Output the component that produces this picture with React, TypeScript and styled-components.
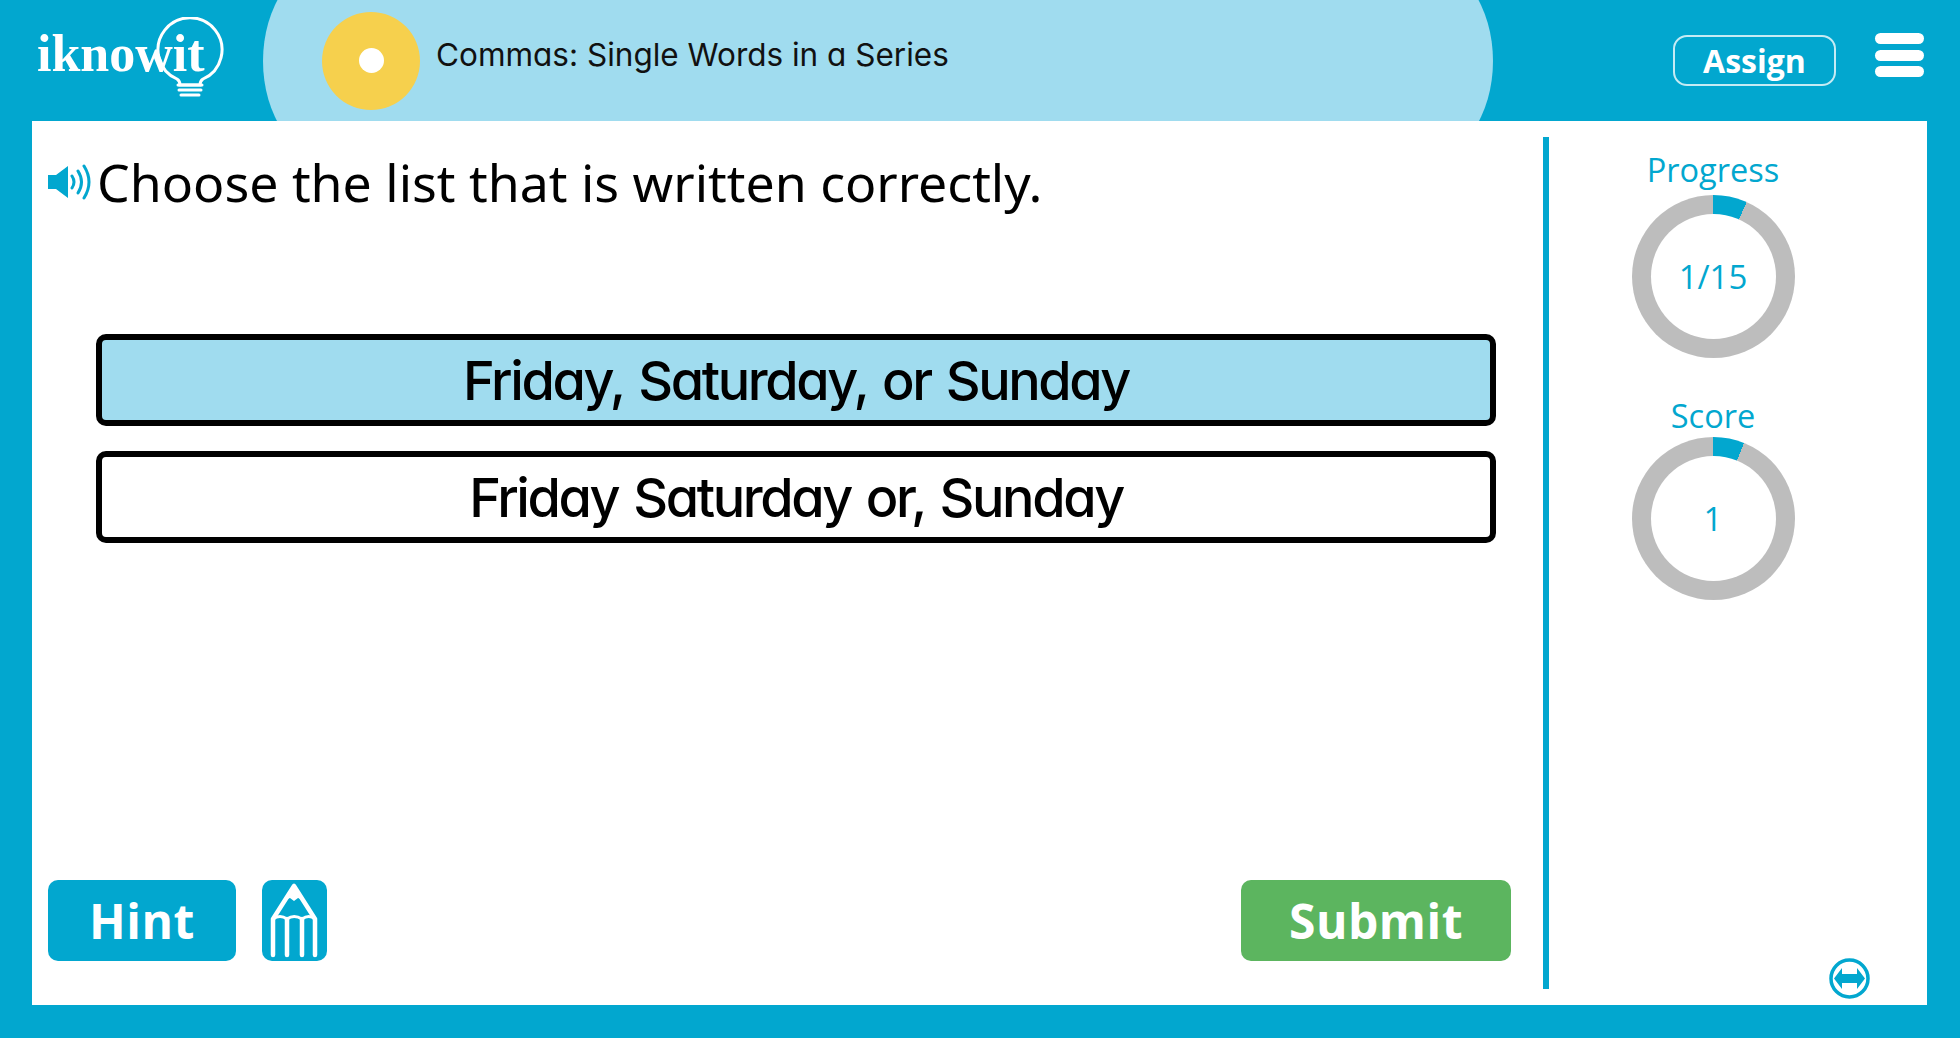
import React from 'react';
import styled, { createGlobalStyle } from 'styled-components';

const BLUE = '#02a7cf';
const PALE = '#a0dcef';

const GlobalStyle = createGlobalStyle`
  html, body { margin: 0; padding: 0; background: ${BLUE}; }
`;

const Page = styled.div`
  width: 1960px;
  height: 1038px;
  display: flex;
  flex-direction: column;
  overflow: hidden;
  background: ${BLUE};
  font-family: "Open Sans", "Noto Sans", sans-serif;
`;

const Header = styled.header`
  height: 121px;
  flex: none;
  display: flex;
  align-items: center;
  overflow: hidden;
`;

const LogoBox = styled.div`
  position: relative;
  width: 263px;
  height: 121px;
  flex: none;
`;

const LogoText = styled.span`
  position: absolute;
  left: 37px;
  top: 24px;
  font-family: "Liberation Serif", serif;
  font-weight: 700;
  font-size: 52px;
  line-height: 60px;
  color: #fff;
`;

const Bulb = styled.svg`
  position: absolute;
  left: 152px;
  top: 17px;
`;

const TopicPill = styled.div`
  width: 1230px;
  height: 200px;
  flex: none;
  display: flex;
  align-items: center;
  padding-left: 59px;
  box-sizing: border-box;
  background: ${PALE};
  border-radius: 70px / 100px;
`;

const Medal = styled.div`
  width: 98px;
  height: 98px;
  flex: none;
  border-radius: 50%;
  background: #f6d04d;
  display: flex;
  align-items: center;
  justify-content: center;
`;

const MedalDot = styled.div`
  width: 25px;
  height: 25px;
  border-radius: 50%;
  background: #fff;
`;

const TopicTitle = styled.h1`
  margin: -12px 0 0 16px;
  font-family: "Inter", sans-serif;
  font-feature-settings: 'cv11';
  font-weight: 400;
  font-size: 31.5px;
  color: #111;
`;

const AssignButton = styled.button`
  width: 163px;
  height: 51px;
  margin: 0 39px 0 180px;
  padding: 0;
  flex: none;
  box-sizing: border-box;
  background: transparent;
  border: 2px solid #c6ebf4;
  border-radius: 14px;
  font-family: "Open Sans", sans-serif;
  font-weight: 700;
  font-size: 32px;
  line-height: 42px;
  color: #fff;
`;

const Hamburger = styled.div`
  width: 49px;
  margin-bottom: 11px;
  display: flex;
  flex-direction: column;
  gap: 5.5px;
  flex: none;
`;

const HamburgerBar = styled.span`
  height: 11px;
  border-radius: 6px;
  background: #fff;
`;

const Main = styled.main`
  height: 884px;
  margin: 0 33px 0 32px;
  flex: none;
  display: flex;
  background: #fff;
`;

const QuestionPane = styled.section`
  width: 1511px;
  flex: none;
  display: flex;
  flex-direction: column;
  box-sizing: border-box;
  padding: 26px 32px 44px 16px;
`;

const QuestionRow = styled.div`
  display: flex;
  align-items: center;
  gap: 5px;
  height: 70px;
`;

const QuestionText = styled.div`
  font-family: "Noto Sans", sans-serif;
  font-size: 51.8px;
  line-height: 70px;
  color: #000;
`;

const Choices = styled.div`
  margin: 117px 0 0 48px;
  width: 1400px;
  display: flex;
  flex-direction: column;
  gap: 25px;
`;

const Choice = styled.div<{ $selected?: boolean }>`
  height: 92px;
  box-sizing: border-box;
  border: 6px solid #000;
  border-radius: 10px;
  background: ${(p) => (p.$selected ? PALE : '#fff')};
  display: flex;
  align-items: center;
  justify-content: center;
  font-family: "Inter", sans-serif;
  font-feature-settings: 'cv11';
  font-weight: 500;
  font-size: 54px;
  letter-spacing: -2.4px;
  word-spacing: 3px;
  color: #000;
`;

const Actions = styled.div`
  margin-top: auto;
  display: flex;
  align-items: stretch;
  height: 81px;
`;

const ActionButton = styled.button<{ $green?: boolean }>`
  width: ${(p) => (p.$green ? '270px' : '188px')};
  margin-left: ${(p) => (p.$green ? 'auto' : '0')};
  padding: 0;
  border: 0;
  border-radius: 10px;
  background: ${(p) => (p.$green ? '#5cb55f' : BLUE)};
  font-family: "Open Sans", sans-serif;
  font-weight: 700;
  font-size: 48px;
  letter-spacing: 0.5px;
  color: #fff;
`;

const PencilButton = styled.div`
  width: 65px;
  margin-left: 26px;
  border-radius: 10px;
  background: ${BLUE};
  display: flex;
`;

const Divider = styled.div`
  width: 6px;
  flex: none;
  margin: 16px 0;
  background: ${BLUE};
`;

const Sidebar = styled.aside`
  flex: 1;
  display: flex;
  flex-direction: column;
  align-items: center;
  box-sizing: border-box;
  padding: 27px 50px 6px 0;
`;

const StatLabel = styled.div`
  font-size: 32.5px;
  line-height: 44px;
  color: ${BLUE};
`;

const Ring = styled.div<{ $deg: number; $gap: number }>`
  width: 163px;
  height: 163px;
  margin-top: ${(p) => p.$gap}px;
  margin-bottom: 36px;
  flex: none;
  border-radius: 50%;
  background: conic-gradient(${BLUE} 0 ${(p) => p.$deg}deg, #bdbdbd 0);
  display: flex;
  align-items: center;
  justify-content: center;
`;

const RingCenter = styled.div`
  width: 125px;
  height: 125px;
  border-radius: 50%;
  background: #fff;
  display: flex;
  align-items: center;
  justify-content: center;
  font-size: 33px;
  color: ${BLUE};
`;

const SwapIcon = styled.svg`
  margin-top: auto;
  align-self: flex-end;
  margin-right: 7px;
`;

const Speaker = () => (
  <svg width="44" height="36" viewBox="0 0 44 36">
    <path d="M0 11h8L20 2v32L8 25H0z" fill={BLUE} />
    <path d="M24 12q4 6 0 12M30 7q7 11 0 22M36 2q10 16 0 32" fill="none" stroke={BLUE} strokeWidth="3" strokeLinecap="round" />
  </svg>
);

const Pencil = () => (
  <svg width="65" height="81" viewBox="0 0 65 81">
    <path d="M32 6L11 39v36M32 6l21 33v36M25 39v36M40 39v36" fill="none" stroke="#fff" strokeWidth="4.5" strokeLinecap="round" strokeLinejoin="round" />
    <path d="M32 6l-9 14 5-2 4 3 4-3 5 2z" fill="#fff" />
    <path d="M11 39q7-5 14 0q7-5 15 0q7-5 13 0" fill="none" stroke="#fff" strokeWidth="3" />
  </svg>
);

export default function App() {
  return (
    <Page>
      <GlobalStyle />
      <Header>
        <LogoBox>
          <LogoText>iknowit</LogoText>
          <Bulb width="76" height="84" viewBox="0 0 76 84">
            <path d="M25 62a32 32 0 1 1 26 0q-3 2-3 6H28q0-4-3-6z" fill="none" stroke="#fff" strokeWidth="3" />
            <path d="M26 68h24M27 73h22M29 78h18" stroke="#fff" strokeWidth="3" strokeLinecap="round" />
          </Bulb>
        </LogoBox>
        <TopicPill>
          <Medal>
            <MedalDot />
          </Medal>
          <TopicTitle>Commas: Single Words in a Series</TopicTitle>
        </TopicPill>
        <AssignButton>Assign</AssignButton>
        <Hamburger>
          <HamburgerBar />
          <HamburgerBar />
          <HamburgerBar />
        </Hamburger>
      </Header>
      <Main>
        <QuestionPane>
          <QuestionRow>
            <Speaker />
            <QuestionText>Choose the list that is written correctly.</QuestionText>
          </QuestionRow>
          <Choices>
            <Choice $selected>Friday, Saturday, or Sunday</Choice>
            <Choice>Friday Saturday or, Sunday</Choice>
          </Choices>
          <Actions>
            <ActionButton>Hint</ActionButton>
            <PencilButton>
              <Pencil />
            </PencilButton>
            <ActionButton $green>Submit</ActionButton>
          </Actions>
        </QuestionPane>
        <Divider />
        <Sidebar>
          <StatLabel>Progress</StatLabel>
          <Ring $deg={24} $gap={3}>
            <RingCenter>1/15</RingCenter>
          </Ring>
          <StatLabel>Score</StatLabel>
          <Ring $deg={22} $gap={-1}>
            <RingCenter>1</RingCenter>
          </Ring>
          <SwapIcon width="41" height="41" viewBox="0 0 41 41">
            <circle cx="20.5" cy="20.5" r="18.5" fill="none" stroke={BLUE} strokeWidth="3.5" />
            <path d="M5 20.5L13 10v6h15v-6l8 10.5L28 31v-6H13v6z" fill={BLUE} />
          </SwapIcon>
        </Sidebar>
      </Main>
    </Page>
  );
}
